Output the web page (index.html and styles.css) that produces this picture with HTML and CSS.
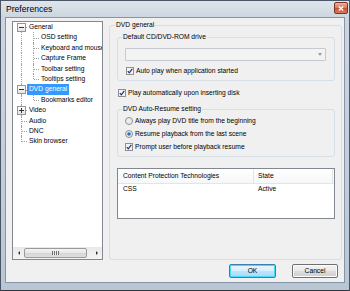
FILE: index.html
```html
<!DOCTYPE html>
<html>
<head>
    <meta charset="utf-8">
    <title>Preferences</title>
    <link rel="stylesheet" href="styles.css">
</head>
<body>
<div class="win">
    <div class="titlebar">
        <span class="title">Preferences</span>
        <span class="close"><svg viewBox="0 0 6 5" width="6" height="5"><path d="M.8 .5L5.2 4.5M5.2 .5L.8 4.5" stroke="#fff" stroke-width="1.3"/></svg></span>
    </div>
    <div class="client">
        <div class="main">
            <div class="tree">
                <div class="nodes">
                    <div class="row"><span class="g exp first"><i class="box"></i></span><span class="lbl">General</span></div>
                    <div class="row"><span class="g v"></span><span class="g"></span><span class="lbl">OSD setting</span></div>
                    <div class="row"><span class="g v"></span><span class="g"></span><span class="lbl">Keyboard and mouse</span></div>
                    <div class="row"><span class="g v"></span><span class="g"></span><span class="lbl">Capture Frame</span></div>
                    <div class="row"><span class="g v"></span><span class="g"></span><span class="lbl">Toolbar setting</span></div>
                    <div class="row"><span class="g v"></span><span class="g l"></span><span class="lbl">Tooltips setting</span></div>
                    <div class="row"><span class="g exp"><i class="box"></i></span><span class="lbl sel">DVD general</span></div>
                    <div class="row"><span class="g v"></span><span class="g l"></span><span class="lbl">Bookmarks editor</span></div>
                    <div class="row"><span class="g exp"><i class="box plus"></i></span><span class="lbl">Video</span></div>
                    <div class="row"><span class="g"></span><span class="lbl">Audio</span></div>
                    <div class="row"><span class="g"></span><span class="lbl">DNC</span></div>
                    <div class="row"><span class="g l"></span><span class="lbl">Skin browser</span></div>
                </div>
                <div class="hscroll">
                    <span class="sbtn"><i class="tri left"></i></span>
                    <span class="thumb"><i class="grip"></i></span>
                    <span class="track"></span>
                    <span class="sbtn"><i class="tri right"></i></span>
                </div>
            </div>
            <fieldset class="grp outer">
                <legend>DVD general</legend>
                <fieldset class="grp g1">
                    <legend>Default CD/DVD-ROM drive</legend>
                    <div class="combo"><i class="arr"></i></div>
                    <div class="opt ind"><svg class="cb" viewBox="0 0 8 8" width="8" height="8"><rect x=".5" y=".5" width="7" height="7" fill="#f4f4f4" stroke="#8e8f8f"/><path d="M1.8 4.2L3.3 5.8L6.3 1.9" fill="none" stroke="#21307a" stroke-width="1.2"/></svg>Auto play when application started</div>
                </fieldset>
                <div class="opt solo"><svg class="cb" viewBox="0 0 8 8" width="8" height="8"><rect x=".5" y=".5" width="7" height="7" fill="#f4f4f4" stroke="#8e8f8f"/><path d="M1.8 4.2L3.3 5.8L6.3 1.9" fill="none" stroke="#21307a" stroke-width="1.2"/></svg>Play automatically upon inserting disk</div>
                <fieldset class="grp g2">
                    <legend>DVD Auto-Resume setting</legend>
                    <div class="opt"><svg class="cb" viewBox="0 0 8 8" width="8" height="8"><circle cx="4" cy="4" r="3.5" fill="#ececec" stroke="#8e8f8f"/></svg>Always play DVD title from the beginning</div>
                    <div class="opt"><svg class="cb" viewBox="0 0 8 8" width="8" height="8"><circle cx="4" cy="4" r="3.5" fill="#ececec" stroke="#8e8f8f"/><circle cx="4" cy="4" r="1.8" fill="#2a6fc4"/></svg>Resume playback from the last scene</div>
                    <div class="opt"><svg class="cb" viewBox="0 0 8 8" width="8" height="8"><rect x=".5" y=".5" width="7" height="7" fill="#f4f4f4" stroke="#8e8f8f"/><path d="M1.8 4.2L3.3 5.8L6.3 1.9" fill="none" stroke="#21307a" stroke-width="1.2"/></svg>Prompt user before playback resume</div>
                </fieldset>
                <div class="list">
                    <div class="lhead">
                        <span class="c1">Content Protection Technologies</span>
                        <span class="c2">State</span>
                    </div>
                    <div class="lrow">
                        <span class="c1">CSS</span>
                        <span class="c2">Active</span>
                    </div>
                </div>
            </fieldset>
        </div>
        <div class="btns">
            <button class="btn def">OK</button>
            <button class="btn cancel">Cancel</button>
        </div>
    </div>
</div>
</body>
</html>
```

FILE: styles.css
```css
body {
    margin: 0;
    font: 6.7px/8px "Liberation Sans", Arial, sans-serif;
    color: #000;
}

.win {
    width: 350px;
    height: 291px;
    box-sizing: border-box;
    border: 1px solid #4a5666;
    border-bottom-color: #2e3640;
    background: linear-gradient(#dfe5ec, #cdd6e0 16px, #c2cedb 60%, #b9c6d4);
    display: flex;
    flex-direction: column;
}

.titlebar {
    height: 16px;
    flex: none;
    display: flex;
    justify-content: space-between;
    align-items: flex-start;
    padding-left: 5px;
}

.title {
    font-size: 8.6px;
    line-height: 10px;
    margin-top: 3px;
}

.close {
    width: 14px;
    height: 12px;
    margin: 1px 1px 0 0;
    box-sizing: border-box;
    border: 1px solid #7a3428;
    border-radius: 2px;
    background: linear-gradient(#eab3a5, #d9745c 50%, #c84f34 50%, #d7795a);
    display: flex;
    align-items: center;
    justify-content: center;
}

.client {
    flex: 1;
    margin: 0 4px 7px;
    border: 1px solid #8594a8;
    background: #f0f0f0;
    display: flex;
    flex-direction: column;
}

.main {
    display: flex;
    padding: 3px 2px 0 6px;
    gap: 6px;
}

/* tree */
.tree {
    width: 91px;
    height: 239px;
    flex: none;
    box-sizing: border-box;
    border: 1px solid #828790;
    background: #fff;
    display: flex;
    flex-direction: column;
}

.nodes {
    flex: 1;
    overflow: hidden;
    padding-left: 2px;
}

.row {
    height: 10.4px;
    display: flex;
    white-space: nowrap;
}

.g {
    position: relative;
    width: 12px;
    flex: none;
}

.g::before {
    content: '';
    position: absolute;
    left: 6px;
    top: 0;
    bottom: 0;
    border-left: 1px dotted #a0a0a0;
}

.g::after {
    content: '';
    position: absolute;
    left: 7px;
    right: 0;
    top: 50%;
    border-top: 1px dotted #a0a0a0;
}

.v::after { display: none; }
.l::before { bottom: 50%; }
.first::before { top: 50%; }

.box {
    position: absolute;
    left: 2px;
    top: 50%;
    margin-top: -4.5px;
    width: 9px;
    height: 9px;
    box-sizing: border-box;
    border: 1px solid #959595;
    background: linear-gradient(#fff, #e4e4e4);
    z-index: 1;
}

.box::before, .plus::after {
    content: '';
    position: absolute;
    left: 1px;
    top: 3px;
    width: 5px;
    height: 1px;
    background: #333;
}

.plus::after {
    left: 3px;
    top: 1px;
    width: 1px;
    height: 5px;
}

.lbl {
    padding: 0 2px;
    line-height: 10.4px;
}

.sel {
    background: #3399ff;
    color: #fff;
}

.hscroll {
    height: 12px;
    flex: none;
    display: flex;
    align-items: center;
    background: linear-gradient(#e9e9e9, #f5f5f5);
}

.sbtn {
    width: 11px;
    height: 12px;
    display: flex;
    align-items: center;
    justify-content: center;
}

.tri {
    border: 2px solid transparent;
}

.tri.left {
    border-left: 0;
    border-right: 2px solid #333;
}

.tri.right {
    border-right: 0;
    border-left: 2px solid #333;
}

.thumb {
    width: 63px;
    height: 10px;
    box-sizing: border-box;
    border: 1px solid #9a9a9a;
    border-radius: 2px;
    background: linear-gradient(#f4f4f4, #e6e6e6 50%, #d6d6d6 50%, #dedede);
    display: flex;
    align-items: center;
    justify-content: center;
}

.grip {
    width: 7px;
    height: 4px;
    background: repeating-linear-gradient(90deg, #6e6e6e 0 1px, #eee 1px 2px);
}

.track { flex: 1; }

/* group boxes */
.grp {
    margin: 0;
    padding: 0 6px 4px 7px;
    border: 1px solid #d5dfe5;
    border-radius: 3px;
    min-width: 0;
}

.grp > legend {
    padding: 0 1px;
    margin-left: -3px;
    line-height: 8px;
}

.outer {
    flex: 1;
    padding-bottom: 0;
}

.outer > legend { margin-left: -2px; }

.g1 {
    margin-top: 4px;
    padding-right: 8px;
}

.g2 { margin-top: 7px; }

.combo {
    height: 13px;
    margin-top: 7px;
    box-sizing: border-box;
    border: 1px solid #c6c9ce;
    border-radius: 1px;
    background: #f3f3f3;
    display: flex;
    justify-content: flex-end;
    align-items: center;
    padding-right: 3px;
}

.arr {
    border: 2.5px solid transparent;
    border-top: 3px solid #9c9c9c;
    border-bottom: 0;
}

.opt {
    height: 10px;
    margin-top: 3px;
    display: flex;
    align-items: center;
    gap: 2px;
    white-space: nowrap;
}

.opt.ind {
    margin: 5px 0 0 1px;
}

.opt.solo {
    margin: 7px 0 0 1px;
}

.cb { flex: none; }

/* list view */
.list {
    margin-top: 11px;
    height: 51px;
    box-sizing: border-box;
    border: 1px solid #828790;
    background: #fff;
}

.lhead, .lrow {
    display: flex;
    white-space: nowrap;
}

.lhead {
    height: 15px;
    box-sizing: border-box;
    border-bottom: 1px solid #e5e5e5;
    background: linear-gradient(#fff, #f6f7f9);
    line-height: 14px;
}

.lrow {
    height: 10px;
    line-height: 10px;
}

.c1 {
    width: 136px;
    box-sizing: border-box;
    padding-left: 5px;
}

.c2 {
    width: 79px;
    box-sizing: border-box;
    padding-left: 4px;
}

.lhead .c1, .lhead .c2 {
    border-right: 1px solid #e3e4e6;
}

/* buttons */
.btns {
    display: flex;
    justify-content: flex-end;
    gap: 16px;
    margin-top: 4px;
    padding-right: 6px;
}

.btn {
    width: 46px;
    height: 14px;
    padding: 0;
    font: inherit;
    color: #000;
    border: 1px solid #707070;
    border-radius: 2px;
    background: linear-gradient(#f2f2f2, #ebebeb 45%, #dddddd 50%, #cfcfcf);
    box-shadow: inset 0 0 0 1px #fcfcfc;
}

.btn.def {
    width: 47px;
    border-color: #3c7fb1;
    background: linear-gradient(#eaf6fd, #d9f0fc 45%, #bee6fd 50%, #a7d9f5);
    box-shadow: inset 0 0 0 1px #48d8fb;
}
```
